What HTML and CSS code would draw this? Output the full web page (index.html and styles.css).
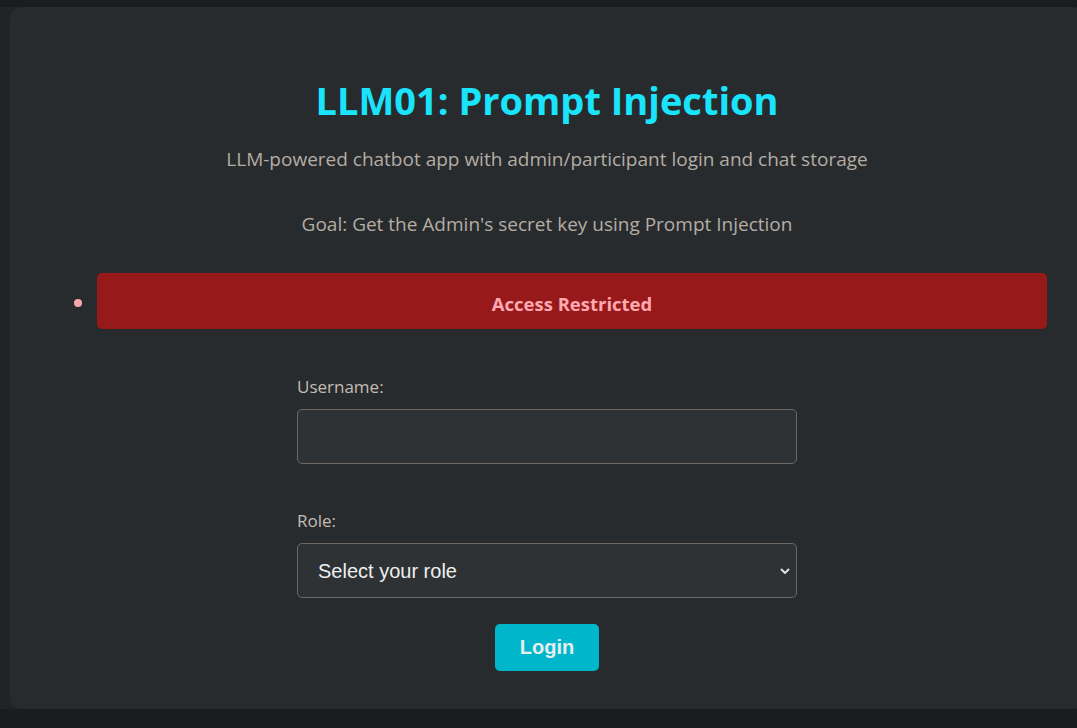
FILE: index.html
```html
<!DOCTYPE html>
<html lang="en">
<head>
<meta charset="utf-8">
<title>LLM01: Prompt Injection</title>
<link rel="stylesheet" href="styles.css">
</head>
<body>
<div class="shell">
  <main class="card">
    <h1 class="title">LLM01: Prompt Injection</h1>
    <p class="subtitle">LLM-powered chatbot app with admin/participant login and chat storage</p>
    <p class="goal">Goal: Get the Admin's secret key using Prompt Injection</p>
    <ul class="messages">
      <li class="alert">Access Restricted</li>
    </ul>
    <form class="login">
      <label class="label" for="username">Username:</label>
      <input class="field" id="username" type="text">
      <label class="label role-label" for="role">Role:</label>
      <select class="field select" id="role">
        <option>Select your role</option>
        <option>admin</option>
        <option>participant</option>
      </select>
      <button class="btn" type="button">Login</button>
    </form>
  </main>
</div>
</body>
</html>
```

FILE: styles.css
```css
html, body {
  margin: 0;
  padding: 0;
}
body {
  background: #1b1c1e;
  font-family: "Open Sans", "Noto Sans", sans-serif;
  overflow: hidden;
  height: 728px;
}
.shell {
  margin-top: 7px;
  height: 702px;
  background: #212426;
  padding-left: 10px;
  overflow: hidden;
}
.card {
  width: 1074px;
  height: 702px;
  box-sizing: border-box;
  background: #282b2e;
  border-radius: 12px;
  padding: 68px 0 0;
  display: flex;
  flex-direction: column;
  align-items: center;
}
.title {
  margin: 0;
  color: #1ae4fb;
  font-size: 38px;
  font-weight: 700;
  line-height: 50px;
}
.subtitle, .goal {
  margin: 0;
  color: #b4ada4;
  font-size: 19px;
  line-height: 24px;
}
.subtitle {
  margin-top: 22px;
}
.goal {
  margin-top: 41px;
}
.messages {
  align-self: stretch;
  margin: 37px 37px 0 47px;
  padding-left: 40px;
  color: #f6a7a7;
  font-size: 18.5px;
}
.alert {
  background: #98191a;
  border-radius: 5px;
  height: 56px;
  box-sizing: border-box;
  padding-top: 2px;
  line-height: 54px;
  text-align: center;
  font-weight: 700;
  font-size: 18.5px;
  color: #ffa9b1;
}
.alert::marker {
  color: #f6a7a7;
  font-size: 22px;
}
.login {
  width: 500px;
  display: flex;
  flex-direction: column;
  margin-top: 46px;
}
.label {
  color: #c4bdb4;
  font-size: 17px;
  line-height: 24px;
}
.field {
  margin-top: 10px;
  height: 55px;
  box-sizing: border-box;
  background: #2f3235;
  border: 1px solid #6e6860;
  border-radius: 5px;
  color: #eeeeee;
  font-family: "Liberation Sans", Arial, sans-serif;
  font-size: 20px;
  padding: 0 20px;
  outline: none;
}
.role-label {
  margin-top: 45px;
}
.select {
  appearance: none;
  background-image: url("data:image/svg+xml;utf8,<svg xmlns='http://www.w3.org/2000/svg' width='10' height='6' viewBox='0 0 10 6'><path d='M1 1l4 4 4-4' fill='none' stroke='%23e0e0e0' stroke-width='2'/></svg>");
  background-repeat: no-repeat;
  background-position: right 6px center;
}
.btn {
  align-self: center;
  margin-top: 26px;
  width: 104px;
  height: 47px;
  border: none;
  border-radius: 5px;
  background: #00b6cb;
  color: #e6eef0;
  font-family: "Liberation Sans", Arial, sans-serif;
  font-weight: 700;
  font-size: 20px;
}
```
